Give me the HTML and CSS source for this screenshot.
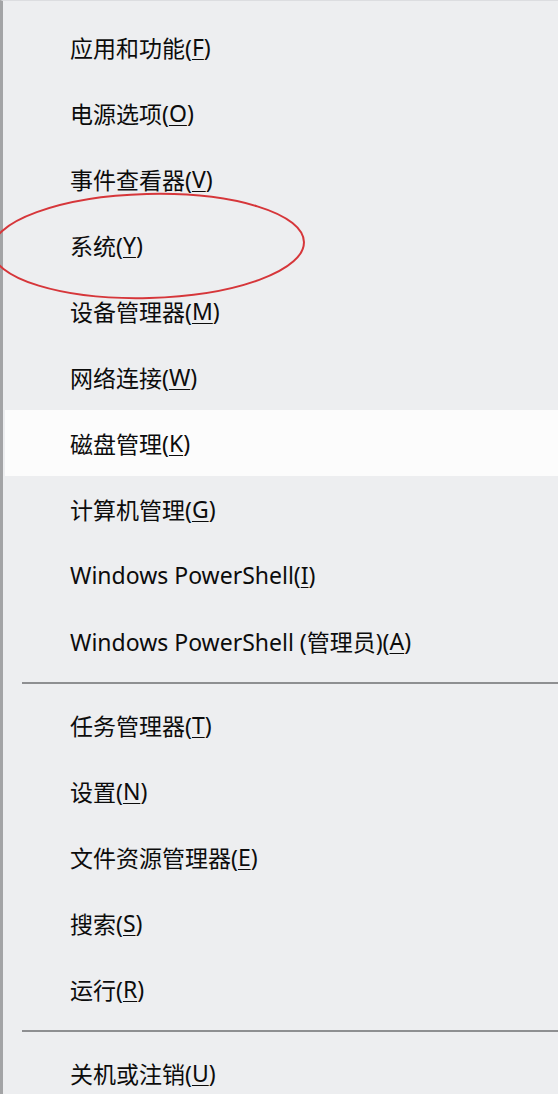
FILE: index.html
```html
<!DOCTYPE html>
<html lang="zh-CN">
<head>
<meta charset="utf-8">
<title>Win+X 菜单</title>
<link rel="stylesheet" href="styles.css">
</head>
<body>
<div class="menu">
  <div class="group first">
    <div class="item">应用和功能(<u>F</u>)</div>
    <div class="item">电源选项(<u>O</u>)</div>
    <div class="item">事件查看器(<u>V</u>)</div>
    <div class="item">系统(<u>Y</u>)</div>
    <div class="item">设备管理器(<u>M</u>)</div>
    <div class="item">网络连接(<u>W</u>)</div>
    <div class="item hover">磁盘管理(<u>K</u>)</div>
    <div class="item">计算机管理(<u>G</u>)</div>
    <div class="item">Windows PowerShell(<u>I</u>)</div>
    <div class="item">Windows PowerShell (管理员)(<u>A</u>)</div>
  </div>
  <div class="sep"></div>
  <div class="group">
    <div class="item">任务管理器(<u>T</u>)</div>
    <div class="item">设置(<u>N</u>)</div>
    <div class="item">文件资源管理器(<u>E</u>)</div>
    <div class="item">搜索(<u>S</u>)</div>
    <div class="item">运行(<u>R</u>)</div>
  </div>
  <div class="sep"></div>
  <div class="group">
    <div class="item">关机或注销(<u>U</u>)</div>
  </div>
  <svg class="mark" width="340" height="130" viewBox="0 0 340 130">
    <ellipse cx="162" cy="60" rx="156" ry="52" fill="none" stroke="#d6363a" stroke-width="2" transform="rotate(-1.5 162 60)"/>
  </svg>
</div>
</body>
</html>
```
FILE: styles.css
```css
html, body {
  margin: 0;
  padding: 0;
  background: #edeef0;
}
body {
  height: 1094px;
  overflow: hidden;
}
.menu {
  position: relative;
  min-height: 1094px;
  border-left: 3px solid #a3a4a6;
  border-top: 1px solid #dcdde0;
  box-sizing: border-box;
  background: #edeef0;
  font-family: "Noto Sans", "Noto Sans CJK SC", sans-serif;
  font-size: 23px;
  color: #0c0c0c;
}
.group.first {
  padding-top: 13px;
}
.item {
  height: 66px;
  display: flex;
  align-items: center;
  padding-left: 65px;
  margin-left: 2px;
  white-space: nowrap;
}
.item u {
  text-decoration-thickness: 1px;
  text-underline-offset: 3px;
}
.item.hover {
  background: #fcfcfc;
}
.sep {
  height: 2px;
  margin: 8px 0 8px 19px;
  background: #8e8f91;
}
.mark {
  position: absolute;
  left: -17px;
  top: 185px;
}
```
